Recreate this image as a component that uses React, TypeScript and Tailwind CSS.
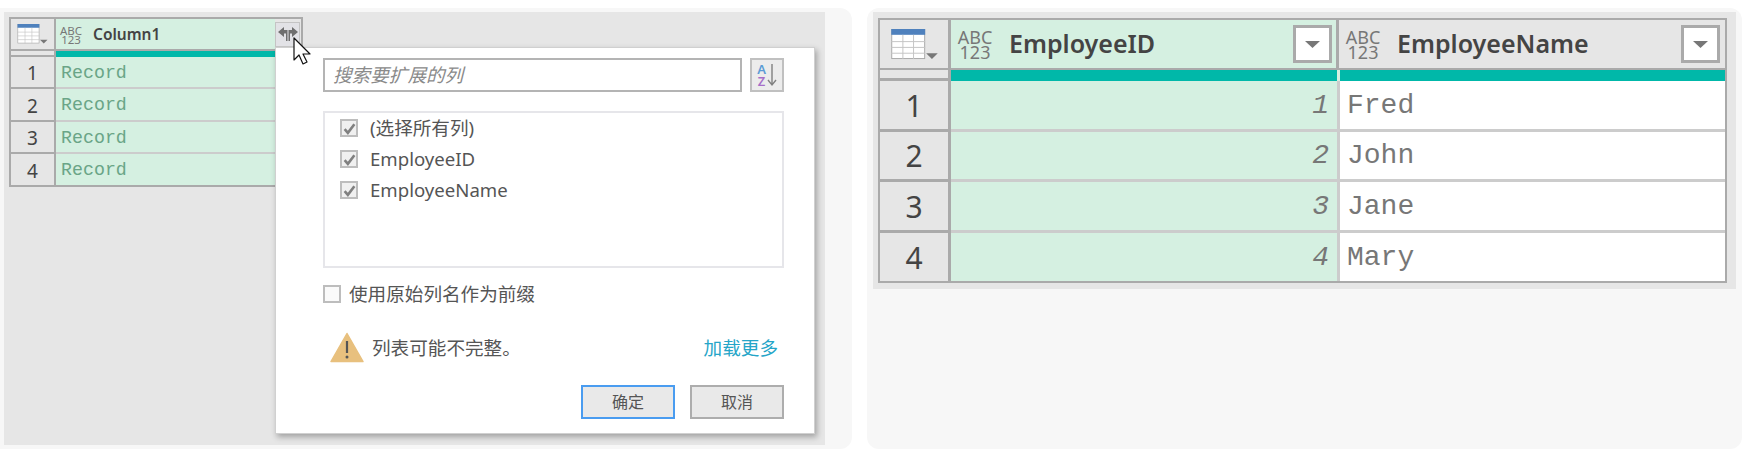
const ui = "font-['Noto_Sans','Noto_Sans_CJK_SC',sans-serif]"

function TypeBadge({ big }: { big?: boolean }) {
  return (
    <div className={`flex flex-col items-center text-[#777] shrink-0 ${ui} ${big ? "w-[32px] mt-[2px] text-[18px] leading-[15px]" : "w-[20px] mt-[1px] text-[11.5px] leading-[9px]"}`}>
      <span>ABC</span>
      <span>123</span>
    </div>
  )
}

function TableIcon({ className }: { className: string }) {
  return (
    <svg viewBox="0 0 48 32" className={className}>
      <rect x="0.5" y="0.5" width="34" height="30" fill="#fff" stroke="#a8a8a8" />
      <rect x="0" y="0" width="35" height="6" fill="#4f81bd" />
      <path d="M0 13h35M0 19h35M0 25h35M12 6v25M23 6v25" stroke="#c4c4c4" strokeWidth="1" />
      <path d="M36 25h12l-6 6z" fill="#777" />
    </svg>
  )
}

function ExpandIcon() {
  return (
    <svg viewBox="0 0 20 15" className="w-[20px] h-[15px]">
      <path d="M0 5 6 0v3h3.5v11H8V6.5H6V10z" fill="#6f6f6f" />
      <path d="M20 5 14 0v3h-3.5v11H12V6.5h2V10z" fill="#6f6f6f" />
    </svg>
  )
}

function Caret() {
  return (
    <svg viewBox="0 0 15 7" className="w-[15px] h-[7px]">
      <path d="M0 0h15l-7.5 7z" fill="#777" />
    </svg>
  )
}

function DropButton() {
  return (
    <div className="w-[39px] h-[38px] border-[3px] border-[#aaa] bg-white flex items-center justify-center shrink-0">
      <Caret />
    </div>
  )
}

function Check({ on }: { on?: boolean }) {
  return (
    <div className={`w-[18px] h-[18px] border-2 border-[#bdbdbd] flex items-center justify-center shrink-0 ${on ? "bg-[#f0f0f0]" : "bg-[#fafafa]"}`}>
      {on && (
        <svg viewBox="0 0 12 12" className="w-[13px] h-[13px]">
          <path d="M1.5 6.5 4.5 10 10.5 2" fill="none" stroke="#808080" strokeWidth="2.4" />
        </svg>
      )}
    </div>
  )
}

function SmallTable() {
  const rows = [
    { n: "1", h: "h-[32px]", line: "border-b-2" },
    { n: "2", h: "h-[33px]", line: "border-b-2" },
    { n: "3", h: "h-[32px]", line: "border-b-2" },
    { n: "4", h: "h-[31px]", line: "" },
  ]
  return (
    <div className="w-[294px] h-[170px] border-2 border-[#aaa] bg-[#e6e6e6]">
      <div className="flex h-[32px] border-b-2 border-[#aaa]">
        <div className="w-[45px] border-r-2 border-[#aaa] flex items-center justify-center">
          <TableIcon className="w-[31px] h-[20px]" />
        </div>
        <div className={`w-[219px] bg-[#d5f0e1] flex items-center pl-[5px] ${ui}`}>
          <TypeBadge />
          <span className="ml-[12px] mt-[1px] text-[15.5px] font-semibold text-[#444]">Column1</span>
        </div>
        <div className="w-[25px] h-[25px] mt-[3px] border border-[#c4c4c4] bg-[#e2e2e6] flex items-center justify-center relative z-20">
          <ExpandIcon />
        </div>
      </div>
      <div className="flex h-[6px]">
        <div className="w-[45px] border-r-2 border-b-2 border-[#aaa]" />
        <div className="w-[219px] bg-[#00b8a9]" />
      </div>
      {rows.map((r) => (
        <div key={r.n} className={`flex ${r.h}`}>
          <div className={`w-[45px] pt-[3px] border-r-2 border-[#aaa] flex items-center justify-center text-[19px] text-[#444] ${ui} ${r.line}`}>
            {r.n}
          </div>
          <div className={`w-[219px] pt-[3px] bg-[#d5f0e1] flex items-center pl-[5px] border-[#ccc] font-['Liberation_Mono',monospace] text-[18.3px] text-[#6aa587] ${r.line}`}>
            Record
          </div>
        </div>
      ))}
    </div>
  )
}

function ExpandPopup() {
  return (
    <div className={`absolute left-[271px] top-[35px] z-10 w-[540px] h-[387px] bg-white border border-[#d0d0d0] shadow-[2px_3px_6px_rgba(0,0,0,0.3)] pl-[47px] pr-[30px] pt-[10px] flex flex-col text-[18.6px] text-[#555] ${ui}`}>
      <div className="flex h-[34px] justify-between">
        <div className="w-[419px] border-2 border-[#b4b4b4] flex items-center pl-[8px] italic text-[#8a8a8a]">
          搜索要扩展的列
        </div>
        <div className="w-[34px] border-2 border-[#c0c0c0] bg-[#ececec] flex items-center justify-center gap-[1px]">
          <div className="flex flex-col items-center text-[13px] leading-[12px] font-semibold">
            <span className="text-[#5b9bd5]">A</span>
            <span className="text-[#a66fc9]">Z</span>
          </div>
          <svg viewBox="0 0 10 24" className="w-[10px] h-[24px]">
            <path d="M5 1v21M1 17l4 5 4-5" fill="none" stroke="#808080" strokeWidth="1.4" />
          </svg>
        </div>
      </div>
      <div className="mt-[19px] h-[157px] border-2 border-[#e6e6ea] pl-[15px] pt-[2px] flex flex-col gap-[5px]">
        {["(选择所有列)", "EmployeeID", "EmployeeName"].map((label) => (
          <div key={label} className="flex items-center h-[26px] gap-[12px]">
            <Check on />
            <span>{label}</span>
          </div>
        ))}
      </div>
      <div className="mt-[17px] h-[18px] flex items-center gap-[8px]">
        <Check />
        <span>使用原始列名作为前缀</span>
      </div>
      <div className="mt-[29px] h-[31px] flex items-center pl-[7px] pr-[6px]">
        <svg viewBox="0 0 34 31" className="w-[34px] h-[31px] shrink-0">
          <path d="M17 1.5 33 29.5H1z" fill="#e8c07e" stroke="#e8c07e" strokeWidth="1.5" strokeLinejoin="round" />
          <path d="M17 9v12" stroke="#555" strokeWidth="2.2" />
          <circle cx="17" cy="25" r="1.5" fill="#555" />
        </svg>
        <span className="ml-[8px]">列表可能不完整。</span>
        <span className="ml-auto text-[#25a5c8]">加载更多</span>
      </div>
      <div className="mt-[22px] h-[34px] flex justify-end gap-[15px] text-[16px]">
        <div className="w-[94px] border-2 border-[#4a9cf0] bg-[#e9e9e9] flex items-center justify-center">确定</div>
        <div className="w-[94px] border-2 border-[#adadad] bg-[#e9e9e9] flex items-center justify-center">取消</div>
      </div>
    </div>
  )
}

function BigTable() {
  const rows = [
    { n: "1", name: "Fred", h: "h-[51px]", line: "border-b-[3px]" },
    { n: "2", name: "John", h: "h-[50px]", line: "border-b-[3px]" },
    { n: "3", name: "Jane", h: "h-[51px]", line: "border-b-[3px]" },
    { n: "4", name: "Mary", h: "h-[48px]", line: "" },
  ]
  return (
    <div className="w-[849px] h-[265px] border-2 border-[#aaa] bg-[#e6e6e6]">
      <div className="flex h-[50px] border-b-2 border-[#aaa]">
        <div className="w-[71px] border-r-[3px] border-[#aaa] flex items-center justify-center">
          <TableIcon className="w-[47px] h-[31px]" />
        </div>
        <div className={`w-[388px] bg-[#d5f0e1] flex items-center pl-[8px] pr-[4px] border-r-[3px] border-[#aaa] ${ui}`}>
          <TypeBadge big />
          <span className="ml-[18px] text-[25px] font-semibold text-[#444]">EmployeeID</span>
          <div className="ml-auto"><DropButton /></div>
        </div>
        <div className={`flex-1 flex items-center pl-[8px] pr-[5px] ${ui}`}>
          <TypeBadge big />
          <span className="ml-[18px] text-[25px] font-semibold text-[#444]">EmployeeName</span>
          <div className="ml-auto"><DropButton /></div>
        </div>
      </div>
      <div className="flex h-[11px]">
        <div className="w-[71px] border-r-[3px] border-b-[3px] border-[#aaa]" />
        <div className="w-[386px] bg-[#00b8a9]" />
        <div className="w-[3px] bg-[#d5f0e1]" />
        <div className="flex-1 bg-[#00b8a9]" />
      </div>
      {rows.map((r) => (
        <div key={r.n} className={`flex ${r.h}`}>
          <div className={`w-[71px] border-r-[3px] border-[#aaa] flex items-center justify-center text-[30px] text-[#444] ${ui} ${r.line}`}>
            {r.n}
          </div>
          <div className={`w-[386px] pt-[1px] bg-[#d5f0e1] flex items-center justify-end pr-[8px] border-[#ccc] font-['Liberation_Mono',monospace] italic text-[28px] text-[#777] ${r.line}`}>
            {r.n}
          </div>
          <div className="w-[3px] bg-[#ccc]" />
          <div className={`flex-1 pt-[1px] bg-white flex items-center pl-[7px] border-[#ccc] font-['Liberation_Mono',monospace] text-[28px] text-[#777] ${r.line}`}>
            {r.name}
          </div>
        </div>
      ))}
    </div>
  )
}

export default function App() {
  return (
    <div className="flex w-[1746px] h-[457px] bg-white pt-2 gap-[15px]">
      <div className="w-[852px] h-[441px] bg-[#f7f7f7] rounded-r-xl pl-1 pt-1">
        <div className="relative w-[821px] h-[433px] bg-[#e6e6e6] pl-[5px] pt-[5px]">
          <SmallTable />
          <ExpandPopup />
          <svg viewBox="0 0 19 29" className="absolute left-[289px] top-[25px] z-30 w-[19px] h-[29px]">
            <path d="M1 1v22l5-5 4 9 4-2-4-8h7z" fill="#fff" stroke="#111" strokeWidth="1.2" strokeLinejoin="round" />
          </svg>
        </div>
      </div>
      <div className="w-[875px] h-[441px] bg-[#f7f7f7] rounded-xl pl-[6px] pt-1">
        <div className="w-[863px] h-[277px] bg-[#e6e6e6] pl-[5px] pt-[6px]">
          <BigTable />
        </div>
      </div>
    </div>
  )
}
